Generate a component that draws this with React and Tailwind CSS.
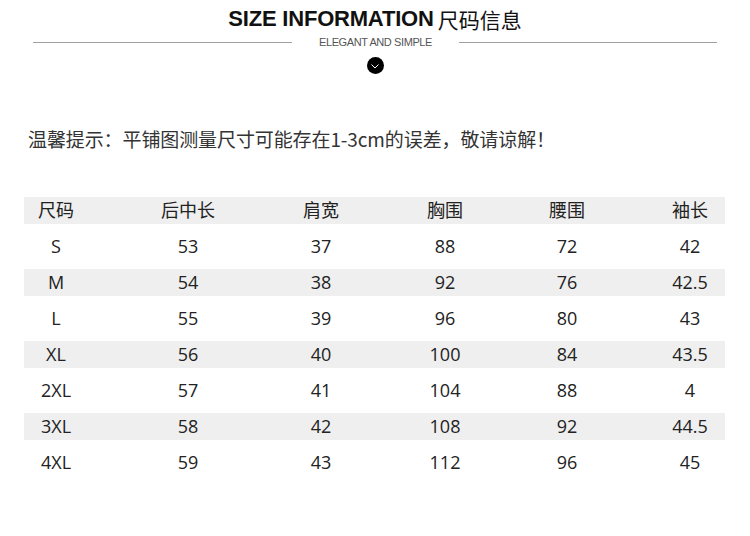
import React from "react";

const rows = [
  ["S", "53", "37", "88", "72", "42"],
  ["M", "54", "38", "92", "76", "42.5"],
  ["L", "55", "39", "96", "80", "43"],
  ["XL", "56", "40", "100", "84", "43.5"],
  ["2XL", "57", "41", "104", "88", "4"],
  ["3XL", "58", "42", "108", "92", "44.5"],
  ["4XL", "59", "43", "112", "96", "45"],
];
const header = ["尺码", "后中长", "肩宽", "胸围", "腰围", "袖长"];
const ml = ["ml-[2px]", "ml-[72px]", "ml-[73px]", "ml-[64px]", "ml-[62px]", "ml-[63px]"];

function Row({ cells, grey }) {
  return (
    <div className="h-[36px] flex items-center">
      <div className={`h-[27px] w-[701px] flex items-center ${grey ? "bg-[#efefef]" : ""}`}>
        {cells.map((c, i) => (
          <div key={i} className={`${ml[i]} w-[60px] text-center leading-none`}>
            {c}
          </div>
        ))}
      </div>
    </div>
  );
}

export default function App() {
  return (
    <div
      className="w-[750px] h-[536px] bg-white text-[#222] overflow-hidden"
      style={{ fontFamily: '"Open Sans", "Noto Sans CJK SC", sans-serif' }}
    >
      <div className="pt-[7px] flex justify-center items-end gap-[4px] text-[#111]">
        <span className="text-[22px] font-bold leading-[24px] tracking-[-0.2px]" style={{ fontFamily: '"Liberation Sans", Arial, sans-serif' }}>
          SIZE INFORMATION
        </span>
        <span className="text-[21px] leading-[24px]" style={{ fontFamily: '"Noto Sans CJK SC", sans-serif' }}>尺码信息</span>
      </div>
      <div className="mt-[4px] flex items-center px-[33px]">
        <div className="h-px bg-[#a0a0a0] w-[259px]" />
        <div className="flex-1 text-center text-[11px] text-[#555] tracking-[-0.4px] leading-[14px]" style={{ fontFamily: '"Liberation Sans", Arial, sans-serif' }}>
          ELEGANT AND SIMPLE
        </div>
        <div className="h-px bg-[#a0a0a0] w-[258px]" />
      </div>
      <div className="mt-[8px] flex justify-center">
        <div className="w-[17px] h-[17px] rounded-full bg-black flex items-center justify-center">
          <svg width="10" height="10" viewBox="0 0 10 10">
            <path d="M1.5 3.5 L5 7 L8.5 3.5" stroke="#ffffff" strokeWidth="1" fill="none" />
          </svg>
        </div>
      </div>
      <div className="mt-[52px] pl-[28px] text-[19px] leading-[26px] text-[#333] tracking-[-0.1px]" style={{ fontFamily: '"Noto Sans CJK SC", sans-serif' }}>
        温馨提示：平铺图测量尺寸可能存在1-3cm的误差，敬请谅解！
      </div>
      <div className="mt-[40px] ml-[24px] text-[18px]" style={{ fontFamily: '"Open Sans", "Noto Sans CJK SC", sans-serif' }}>
        <Row cells={header} grey />
        {rows.map((r, i) => (
          <Row key={i} cells={r} grey={i % 2 === 1} />
        ))}
      </div>
    </div>
  );
}
